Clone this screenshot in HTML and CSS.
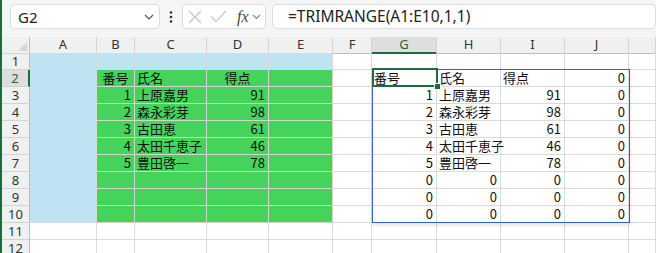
FILE: index.html
```html
<!DOCTYPE html>
<html lang="ja">
<head>
    <meta charset="UTF-8">
    <title>TRIMRANGE</title>
    <link rel="stylesheet" href="styles.css">
</head>
<body>
    <div class="app">
        <div class="toolbar">
            <div class="namebox">
                <span>G2</span>
                <svg class="chev" width="10" height="6" viewBox="0 0 10 6"><path d="M1 1l4 4 4-4" fill="none" stroke="#555" stroke-width="1.2"/></svg>
            </div>
            <div class="kebab">
                <svg width="4" height="14" viewBox="0 0 4 14"><circle cx="2" cy="2.5" r="1.3" fill="#333"/><circle cx="2" cy="7" r="1.3" fill="#333"/><circle cx="2" cy="11.5" r="1.3" fill="#333"/></svg>
            </div>
            <div class="fxbox">
                <svg width="14" height="14" viewBox="0 0 14 14"><path d="M1 1l12 12M13 1L1 13" stroke="#c4c4c4" stroke-width="1.2"/></svg>
                <svg width="17" height="13" viewBox="0 0 17 13"><path d="M1 6.5l5 5L16 1" fill="none" stroke="#c4c4c4" stroke-width="1.2"/></svg>
                <span class="fx">fx</span>
                <svg class="chev" width="9" height="6" viewBox="0 0 9 6"><path d="M1 1l3.5 3.5L8 1" fill="none" stroke="#8a8a8a" stroke-width="1.2"/></svg>
            </div>
            <div class="formula">=TRIMRANGE(A1:E10,1,1)</div>
        </div>

        <div class="sheet">
            <div class="row head">
                <div class="rh corner"><span class="tri"></span></div>
                <div class="ch">A</div><div class="ch">B</div><div class="ch">C</div><div class="ch">D</div><div class="ch">E</div>
                <div class="ch">F</div><div class="ch sel">G</div><div class="ch">H</div><div class="ch">I</div><div class="ch">J</div><div class="ch"></div>
            </div>
            <div class="row">
                <div class="rh">1</div>
                <div class="c blue a"></div><div class="c blue"></div><div class="c blue"></div><div class="c blue"></div><div class="c blue"></div>
                <div class="c"></div><div class="c"></div><div class="c"></div><div class="c"></div><div class="c"></div><div class="c"></div>
            </div>
            <div class="row">
                <div class="rh sel">2</div>
                <div class="c blue a"></div><div class="c green ctr">番号</div><div class="c green">氏名</div><div class="c green ctr">得点</div><div class="c green"></div>
                <div class="c"></div><div class="c">番号</div><div class="c">氏名</div><div class="c">得点</div><div class="c num">0</div><div class="c"></div>
            </div>
            <div class="row">
                <div class="rh">3</div>
                <div class="c blue a"></div><div class="c green num">1</div><div class="c green">上原嘉男</div><div class="c green num">91</div><div class="c green"></div>
                <div class="c"></div><div class="c num">1</div><div class="c">上原嘉男</div><div class="c num">91</div><div class="c num">0</div><div class="c"></div>
            </div>
            <div class="row">
                <div class="rh">4</div>
                <div class="c blue a"></div><div class="c green num">2</div><div class="c green">森永彩芽</div><div class="c green num">98</div><div class="c green"></div>
                <div class="c"></div><div class="c num">2</div><div class="c">森永彩芽</div><div class="c num">98</div><div class="c num">0</div><div class="c"></div>
            </div>
            <div class="row">
                <div class="rh">5</div>
                <div class="c blue a"></div><div class="c green num">3</div><div class="c green">古田恵</div><div class="c green num">61</div><div class="c green"></div>
                <div class="c"></div><div class="c num">3</div><div class="c">古田恵</div><div class="c num">61</div><div class="c num">0</div><div class="c"></div>
            </div>
            <div class="row">
                <div class="rh">6</div>
                <div class="c blue a"></div><div class="c green num">4</div><div class="c green">太田千恵子</div><div class="c green num">46</div><div class="c green"></div>
                <div class="c"></div><div class="c num">4</div><div class="c">太田千恵子</div><div class="c num">46</div><div class="c num">0</div><div class="c"></div>
            </div>
            <div class="row">
                <div class="rh">7</div>
                <div class="c blue a"></div><div class="c green num">5</div><div class="c green">豊田啓一</div><div class="c green num">78</div><div class="c green"></div>
                <div class="c"></div><div class="c num">5</div><div class="c">豊田啓一</div><div class="c num">78</div><div class="c num">0</div><div class="c"></div>
            </div>
            <div class="row">
                <div class="rh">8</div>
                <div class="c blue a"></div><div class="c green"></div><div class="c green"></div><div class="c green"></div><div class="c green"></div>
                <div class="c"></div><div class="c num">0</div><div class="c num">0</div><div class="c num">0</div><div class="c num">0</div><div class="c"></div>
            </div>
            <div class="row">
                <div class="rh">9</div>
                <div class="c blue a"></div><div class="c green"></div><div class="c green"></div><div class="c green"></div><div class="c green"></div>
                <div class="c"></div><div class="c num">0</div><div class="c num">0</div><div class="c num">0</div><div class="c num">0</div><div class="c"></div>
            </div>
            <div class="row">
                <div class="rh">10</div>
                <div class="c blue a last"></div><div class="c green"></div><div class="c green"></div><div class="c green"></div><div class="c green"></div>
                <div class="c"></div><div class="c num">0</div><div class="c num">0</div><div class="c num">0</div><div class="c num">0</div><div class="c"></div>
            </div>
            <div class="row">
                <div class="rh">11</div>
                <div class="c"></div><div class="c"></div><div class="c"></div><div class="c"></div><div class="c"></div>
                <div class="c"></div><div class="c"></div><div class="c"></div><div class="c"></div><div class="c"></div><div class="c"></div>
            </div>
            <div class="row">
                <div class="rh">12</div>
                <div class="c"></div><div class="c"></div><div class="c"></div><div class="c"></div><div class="c"></div>
                <div class="c"></div><div class="c"></div><div class="c"></div><div class="c"></div><div class="c"></div><div class="c"></div>
            </div>

            <!-- spill range and active cell sit over the grid -->
            <div class="spill"></div>
            <div class="active"></div>
            <div class="handle"></div>
        </div>
    </div>
</body>
</html>
```

FILE: styles.css
```css
body {
    margin: 0;
    background: #ffffff;
    overflow: hidden;
}

.app {
    border-left: 2px solid #1d6b41;
    height: 253px;
    font-family: "Noto Sans", "Noto Sans CJK JP", sans-serif;
    color: #222;
}

.toolbar {
    height: 37px;
    box-sizing: border-box;
    padding: 4px 0 0 8px;
    background: #f5f5f5;
    display: flex;
    align-items: flex-start;
}

.namebox {
    width: 150px;
    height: 25px;
    box-sizing: border-box;
    background: white;
    border: 1px solid #dcdcdc;
    border-radius: 5px;
    display: flex;
    align-items: center;
    justify-content: space-between;
    padding: 0 5px 0 7px;
    font-size: 15px;
}

.kebab {
    width: 22px;
    height: 25px;
    display: flex;
    align-items: center;
    justify-content: center;
}

.fxbox {
    width: 84px;
    height: 25px;
    box-sizing: border-box;
    background: white;
    border: 1px solid #dcdcdc;
    border-radius: 5px;
    display: flex;
    align-items: center;
    gap: 8px;
    padding: 0 3px 0 5px;
}

.fx {
    font-family: "Liberation Serif", serif;
    font-style: italic;
    font-size: 16px;
    color: #444;
    margin-left: 2px;
    margin-right: -5px;
}

.formula {
    margin-left: 6px;
    flex: 1;
    height: 25px;
    box-sizing: border-box;
    background: white;
    border: 1px solid #dcdcdc;
    border-radius: 5px;
    padding: 0 0 0 15px;
    font-size: 15.5px;
    line-height: 22px;
    color: #222;
}

.sheet {
    position: relative;
}

.row {
    display: grid;
    grid-template-columns: 28px 67px 38px 72px 62px 64px 39px 65px 64px 64px 64px 1fr;
    height: 17px;
}

.row.head {
    height: 16px;
}

.rh, .ch {
    box-sizing: border-box;
    background: #f0f0f0;
    color: #333;
    font-size: 13px;
    line-height: 15px;
    text-align: center;
    border-right: 1px solid #d4d4d4;
    border-bottom: 1px solid #d4d4d4;
}

.ch {
    border-bottom-color: #bdbdbd;
}

.rh {
    border-right-color: #bdbdbd;
    line-height: 16px;
}

.ch.sel {
    background: #dedede;
    color: #1d6b41;
    border-bottom: 2px solid #1d6b41;
}

.rh.sel {
    background: #dedede;
    color: #1d6b41;
    border-right: 2px solid #1d6b41;
}

.corner {
    position: relative;
}

.tri {
    position: absolute;
    right: 2px;
    bottom: 2px;
    border-left: 9px solid transparent;
    border-bottom: 9px solid #d6d6d6;
}

.c {
    box-sizing: border-box;
    border-right: 1px solid #dadada;
    border-bottom: 1px solid #dadada;
    font-family: "Noto Sans CJK JP", sans-serif;
    font-size: 13px;
    line-height: 16px;
    padding: 0 2px;
    white-space: nowrap;
    color: #111;
}

.num { text-align: right; padding-right: 3px; }
.ctr { text-align: center; }

.blue { background: #bee4f4; }
.blue.a { border-bottom-color: #bee4f4; }
.blue.a.last { border-bottom-color: #dadada; }
.green { background: #46d35b; border-color: #cfd8cf; }

.spill {
    position: absolute;
    left: 370px;
    top: 32px;
    width: 258px;
    height: 154px;
    box-sizing: border-box;
    border: 1px solid #2e66c2;
    box-shadow: 0 2px 4px rgba(0,0,0,0.12);
}

.active {
    position: absolute;
    left: 370px;
    top: 31px;
    width: 66px;
    height: 19px;
    box-sizing: border-box;
    border: 2px solid #1d6b41;
}

.handle {
    position: absolute;
    left: 432px;
    top: 46px;
    width: 5px;
    height: 5px;
    background: #1d6b41;
    border: 1px solid white;
}
```
